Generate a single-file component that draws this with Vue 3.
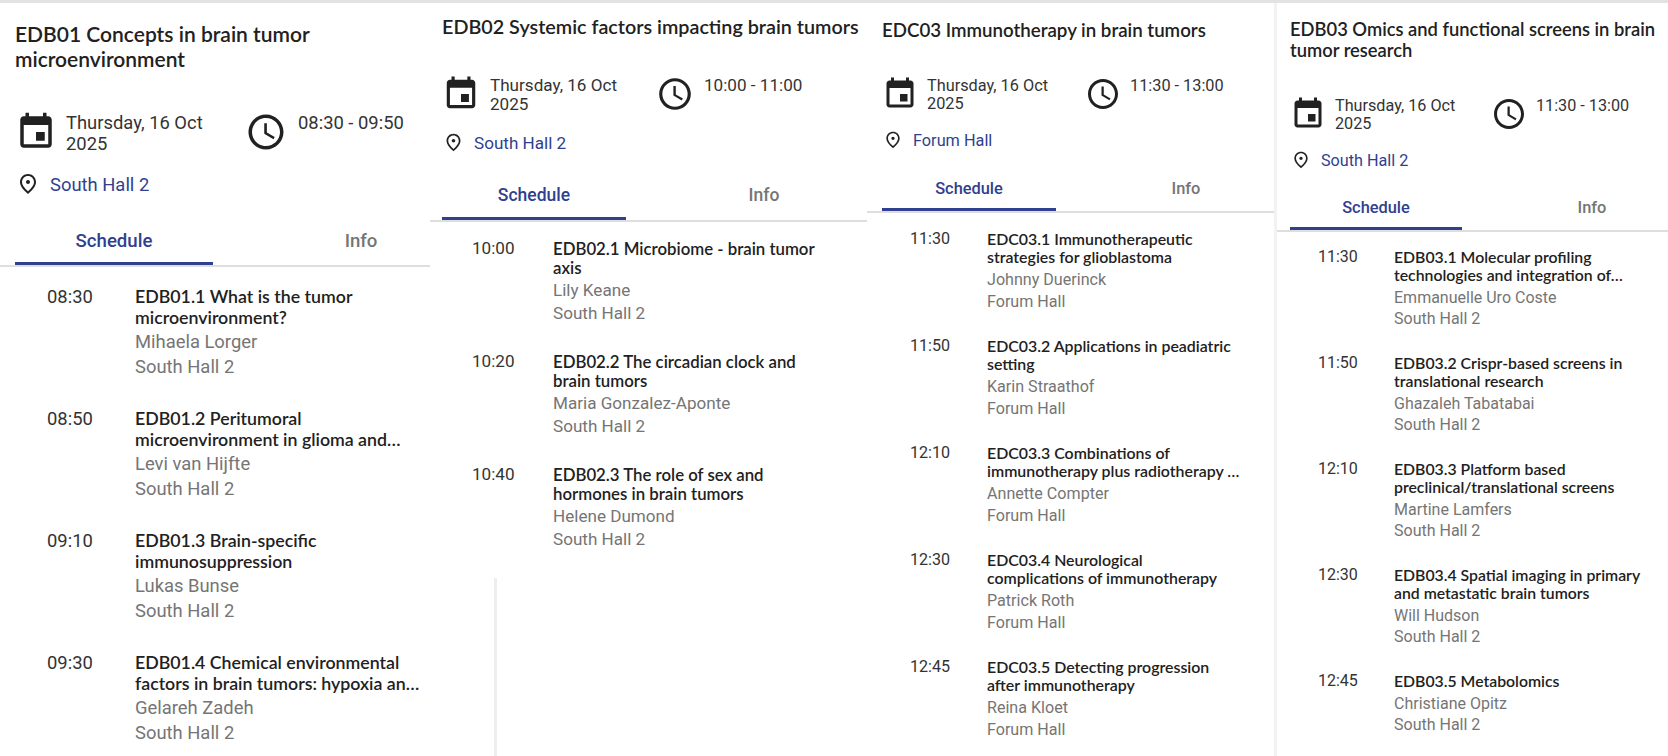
<script setup>
const panels = [
  { cls: 'p1', title: 'EDB01 Concepts in brain tumor\nmicroenvironment', time: '08:30 - 09:50', hall: 'South Hall 2', items: [
    { t: '08:30', n: 'EDB01.1 What is the tumor\nmicroenvironment?', s: 'Mihaela Lorger' },
    { t: '08:50', n: 'EDB01.2 Peritumoral\nmicroenvironment in glioma and…', s: 'Levi van Hijfte' },
    { t: '09:10', n: 'EDB01.3 Brain-specific\nimmunosuppression', s: 'Lukas Bunse' },
    { t: '09:30', n: 'EDB01.4 Chemical environmental\nfactors in brain tumors: hypoxia an…', s: 'Gelareh Zadeh' },
  ]},
  { cls: 'p2', title: 'EDB02 Systemic factors impacting brain tumors', time: '10:00 - 11:00', hall: 'South Hall 2', items: [
    { t: '10:00', n: 'EDB02.1 Microbiome - brain tumor\naxis', s: 'Lily Keane' },
    { t: '10:20', n: 'EDB02.2 The circadian clock and\nbrain tumors', s: 'Maria Gonzalez-Aponte' },
    { t: '10:40', n: 'EDB02.3 The role of sex and\nhormones in brain tumors', s: 'Helene Dumond' },
  ]},
  { cls: 'p3', title: 'EDC03 Immunotherapy in brain tumors', time: '11:30 - 13:00', hall: 'Forum Hall', items: [
    { t: '11:30', n: 'EDC03.1 Immunotherapeutic\nstrategies for glioblastoma', s: 'Johnny Duerinck' },
    { t: '11:50', n: 'EDC03.2 Applications in peadiatric\nsetting', s: 'Karin Straathof' },
    { t: '12:10', n: 'EDC03.3 Combinations of\nimmunotherapy plus radiotherapy …', s: 'Annette Compter' },
    { t: '12:30', n: 'EDC03.4 Neurological\ncomplications of immunotherapy', s: 'Patrick Roth' },
    { t: '12:45', n: 'EDC03.5 Detecting progression\nafter immunotherapy', s: 'Reina Kloet' },
  ]},
  { cls: 'p4', title: 'EDB03 Omics and functional screens in brain\ntumor research', time: '11:30 - 13:00', hall: 'South Hall 2', items: [
    { t: '11:30', n: 'EDB03.1 Molecular profiling\ntechnologies and integration of…', s: 'Emmanuelle Uro Coste' },
    { t: '11:50', n: 'EDB03.2 Crispr-based screens in\ntranslational research', s: 'Ghazaleh Tabatabai' },
    { t: '12:10', n: 'EDB03.3 Platform based\npreclinical/translational screens', s: 'Martine Lamfers' },
    { t: '12:30', n: 'EDB03.4 Spatial imaging in primary\nand metastatic brain tumors', s: 'Will Hudson' },
    { t: '12:45', n: 'EDB03.5 Metabolomics', s: 'Christiane Opitz' },
  ]},
]
</script>

<template>
  <div class="page">
    <section v-for="p in panels" :key="p.cls" class="panel" :class="p.cls">
      <header class="head">
        <h2 class="title">{{ p.title }}</h2>
        <div class="meta">
          <div class="date">
            <svg class="ico" viewBox="0 0 24 24"><path d="M17 12h-5v5h5v-5zM16 1v2H8V1H6v2H5c-1.11 0-1.99.9-1.99 2L3 19c0 1.1.89 2 2 2h14c1.1 0 2-.9 2-2V5c0-1.1-.9-2-2-2h-1V1h-2zm3 18H5V8h14v11z"/></svg>
            <span class="meta-text">Thursday, 16 Oct<br>2025</span>
          </div>
          <div class="clock">
            <svg class="ico" viewBox="0 0 24 24"><path d="M11.99 2C6.47 2 2 6.48 2 12s4.47 10 9.99 10C17.52 22 22 17.52 22 12S17.52 2 11.99 2zM12 20c-4.42 0-8-3.58-8-8s3.58-8 8-8 8 3.58 8 8-3.58 8-8 8zm.5-13H11v6l5.25 3.15.75-1.23-4.5-2.67z"/></svg>
            <span class="meta-text">{{ p.time }}</span>
          </div>
        </div>
        <div class="place">
          <svg class="pin" viewBox="0 0 24 24"><path d="M12 12c-1.1 0-2-.9-2-2s.9-2 2-2 2 .9 2 2-.9 2-2 2zm6-1.8C18 6.57 15.35 4 12 4s-6 2.57-6 6.2c0 2.34 1.95 5.44 6 9.14 4.05-3.7 6-6.8 6-9.14zM12 2c4.2 0 8 3.22 8 8.2 0 3.32-2.67 7.25-8 11.8-5.33-4.55-8-8.48-8-11.8C4 5.22 7.8 2 12 2z"/></svg>
          <span class="hall">{{ p.hall }}</span>
        </div>
      </header>
      <nav class="tabs">
        <span class="tab active">Schedule</span>
        <span class="tab">Info</span>
      </nav>
      <ul class="list">
        <li v-for="it in p.items" :key="it.t" class="item">
          <span class="time">{{ it.t }}</span>
          <div class="body">
            <div class="name">{{ it.n }}</div>
            <div class="sub">{{ it.s }}</div>
            <div class="sub">{{ p.hall }}</div>
          </div>
        </li>
      </ul>
    </section>
  </div>
</template>

<style>
html, body { margin: 0; background: #fff; }
</style>

<style scoped>
.page { display: flex; width: 1668px; height: 756px; overflow: hidden; border-top: 3px solid #e2e2e2; box-sizing: border-box; background: #fff; font-family: Roboto, sans-serif; }
.panel { flex: none; height: 100%; overflow: hidden; box-sizing: border-box; position: relative; }
.p1 { width: 430px; --pl: 15px; --title: 21px; --title-lh: 25px; --pt: 18px; --gap-meta: 40px; --ico: 42px; --ico-gap: 9px; --clock-gap: 11px; --meta-fs: 18.4px; --meta-lh: 21px; --date-w: 230px; --pin: 24px; --pin-x: 1px; --pin-gap: 10px; --place-gap: 18px; --tabs-h: 71px; --tab-w: 198px; --tab-gap: 49px; --tab-fs: 18.6px; --tab-pt: 23px; --list-pl: 47px; --time-w: 88px; --list-pt: 19px; --name-fs: 17.75px; --name-lh: 21px; --name-mb: 2px; --sub-fs: 18.4px; --sub-lh: 24.5px; --item-gap: 29px; }
.p2 { width: 437px; --pl: 12px; --title: 19.75px; --title-lh: 24px; --pt: 12px; --gap-meta: 36px; --ico: 38px; --ico-gap: 10px; --clock-gap: 10px; --meta-fs: 17.1px; --meta-lh: 19px; --date-w: 214px; --pin: 21px; --pin-x: 1px; --pin-gap: 10px; --place-gap: 18px; --tabs-h: 69px; --tab-w: 184px; --tab-gap: 46px; --tab-fs: 17.5px; --tab-pt: 20px; --list-pl: 42px; --time-w: 81px; --list-pt: 17px; --name-fs: 16.8px; --name-lh: 19px; --name-mb: 2px; --sub-fs: 17.1px; --sub-lh: 23px; --item-gap: 27px; }
.p2::after { content: ''; position: absolute; left: 64px; top: 575px; bottom: 0; width: 3px; background: #eeeeee; }
.p3 { width: 407px; --pl: 15px; --title: 18.7px; --title-lh: 22px; --pt: 16px; --gap-meta: 35px; --ico: 36px; --ico-gap: 9px; --clock-gap: 9px; --meta-fs: 16.3px; --meta-lh: 18px; --date-w: 203px; --pin: 20px; --pin-x: 1px; --pin-gap: 10px; --place-gap: 17px; --tabs-h: 63px; --tab-w: 174px; --tab-gap: 43px; --tab-fs: 16.4px; --tab-pt: 18px; --list-pl: 43px; --time-w: 77px; --list-pt: 17px; --name-fs: 15.9px; --name-lh: 18px; --name-mb: 3px; --sub-fs: 16.1px; --sub-lh: 21.5px; --item-gap: 25px; }
.p4 { width: 394px; border-left: 3px solid #f2f2f2; --pl: 13px; --title: 18.35px; --title-lh: 21px; --pt: 16px; --gap-meta: 35px; --ico: 36px; --ico-gap: 9px; --clock-gap: 9px; --meta-fs: 16.2px; --meta-lh: 18px; --date-w: 201px; --pin: 20px; --pin-x: 1px; --pin-gap: 10px; --place-gap: 17px; --tabs-h: 62px; --tab-w: 172px; --tab-gap: 44px; --tab-fs: 16.4px; --tab-pt: 17px; --list-pl: 41px; --time-w: 76px; --list-pt: 16px; --name-fs: 15.8px; --name-lh: 18px; --name-mb: 3px; --sub-fs: 16px; --sub-lh: 21px; --item-gap: 25px; }
.head { padding: var(--pt) 0 0 var(--pl); }
.title { margin: 0 0 var(--gap-meta); font: 600 var(--title)/var(--title-lh) Lato, sans-serif; color: #212121; white-space: pre; }
.meta { display: flex; color: #333; }
.date { width: var(--date-w); flex: none; display: flex; gap: var(--ico-gap); }
.clock { display: flex; gap: var(--clock-gap); }
.ico { width: var(--ico); height: var(--ico); flex: none; fill: #212121; }
.meta-text { font-size: var(--meta-fs); line-height: var(--meta-lh); padding-top: 1px; white-space: nowrap; }
.place { display: flex; align-items: center; gap: var(--pin-gap); margin-top: var(--place-gap); padding-left: var(--pin-x); }
.pin { width: var(--pin); height: var(--pin); fill: #212121; flex: none; }
.hall { font-size: var(--meta-fs); color: #303f8f; }
.tabs { display: flex; box-sizing: border-box; height: var(--tabs-h); padding-left: var(--pl); border-bottom: 2px solid #dedede; }
.tab { flex: none; box-sizing: border-box; width: var(--tab-w); height: calc(var(--tabs-h) - 2px); display: flex; align-items: center; justify-content: center; padding-top: var(--tab-pt); border-bottom: 3px solid transparent; font-size: var(--tab-fs); font-weight: 500; color: #757575; margin-left: var(--tab-gap); }
.tab.active { margin-left: 0; color: #303f8f; border-bottom-color: #303f8f; }
.list { list-style: none; margin: 0; padding: var(--list-pt) 0 0 var(--list-pl); }
.item { display: flex; margin-bottom: var(--item-gap); }
.time { flex: none; width: var(--time-w); font-size: var(--sub-fs); line-height: var(--name-lh); color: #333; }
.body { min-width: 0; flex: 1; }
.name { font: 600 var(--name-fs)/var(--name-lh) Lato, sans-serif; color: #212121; margin-bottom: var(--name-mb); white-space: pre; }
.sub { font-size: var(--sub-fs); line-height: var(--sub-lh); color: #757575; }
</style>
